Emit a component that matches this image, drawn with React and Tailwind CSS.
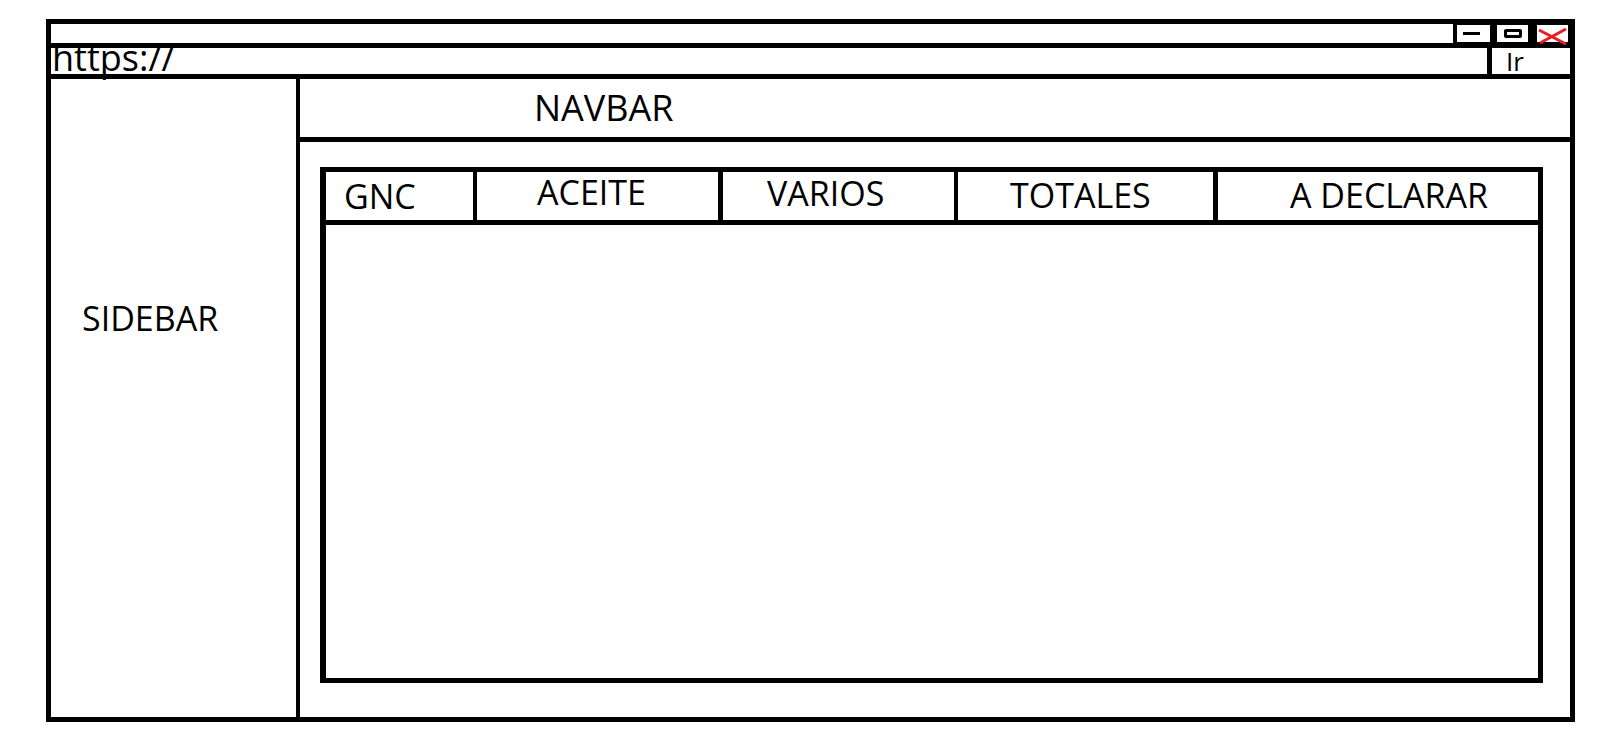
const font = { fontFamily: '"Open Sans", "Noto Sans", sans-serif' }

const tabs = [
  { label: 'GNC', cls: 'w-[151px] border-r-4 pl-[18px] pt-[7px]' },
  { label: 'ACEITE', cls: 'w-[246px] border-r-[5px] pl-[60px] pt-[3px]' },
  { label: 'VARIOS', cls: 'w-[235px] border-r-4 pl-[44px] pt-[4px]' },
  { label: 'TOTALES', cls: 'w-[260px] border-r-[5px] pl-[52px] pt-[6px]' },
  { label: 'A DECLARAR', cls: 'flex-1 pl-[72px] pt-[6px]' },
]

function WindowControls() {
  return (
    <div className="flex h-full bg-black pl-[4px] pr-[2px] py-[1px]">
      <div className="w-[33px] bg-white flex items-center pl-[6px]">
        <div className="w-[17px] h-[3px] bg-black" />
      </div>
      <div className="w-[31px] bg-white ml-[7px] flex items-center justify-center">
        <div className="w-[18px] h-[9px] border-[3px] border-black rounded-[2px]" />
      </div>
      <div className="w-[31px] bg-white ml-[9px] relative">
        <svg className="absolute left-0 top-[3px]" width="31" height="17" viewBox="0 0 31 17">
          <path d="M2 2 L29 16" stroke="#ed1c24" strokeWidth="3" fill="none" />
          <path d="M29 1 L3 15" stroke="#ed1c24" strokeWidth="3" fill="none" />
        </svg>
      </div>
    </div>
  )
}

export default function App() {
  return (
    <div className="min-h-screen bg-white pt-[19px] pl-[46px] text-black" style={font}>
      <div className="w-[1529px] h-[703px] border-[5px] border-black flex flex-col">
        {/* barra de título */}
        <div className="h-[24px] border-b-[5px] border-black flex justify-end shrink-0">
          <WindowControls />
        </div>

        {/* barra de direcciones */}
        <div className="h-[31px] border-b-[5px] border-black flex shrink-0">
          <div className="flex-1 pl-[1px]">
            <p className="text-[36px] leading-[36px] -mt-[8px] whitespace-nowrap">https://</p>
          </div>
          <div className="w-[83px] border-l-[5px] border-black pl-[14px]">
            <p className="text-[26px] leading-[26px]">Ir</p>
          </div>
        </div>

        {/* cuerpo */}
        <div className="flex flex-1 min-h-0">
          <aside className="w-[249px] border-r-4 border-black pl-[31px] pt-[222px] shrink-0">
            <p className="text-[34px] leading-[34px]">SIDEBAR</p>
          </aside>

          <main className="flex-1 flex flex-col min-w-0">
            <div className="h-[63px] border-b-[5px] border-black pl-[234px] pt-[11px] shrink-0">
              <p className="text-[36px] leading-[36px]">NAVBAR</p>
            </div>

            <div className="flex-1 pl-[20px] pt-[25px]">
              <div className="w-[1223px] h-[516px] border-[5px] border-l-[6px] border-black">
                <div className="flex h-[53px] border-b-[5px] border-black">
                  {tabs.map(t => (
                    <div key={t.label} className={`${t.cls} border-black h-full`}>
                      <p className="text-[34px] leading-[34px] whitespace-nowrap">{t.label}</p>
                    </div>
                  ))}
                </div>
              </div>
            </div>
          </main>
        </div>
      </div>
    </div>
  )
}
